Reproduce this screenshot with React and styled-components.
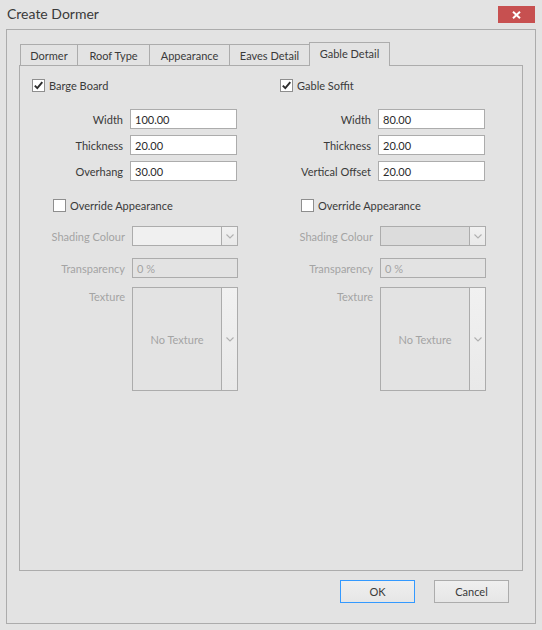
import React from 'react';
import styled, { createGlobalStyle } from 'styled-components';

const GlobalStyle = createGlobalStyle`
  html, body { margin: 0; padding: 0; background: #e3e3e3; }
  body { font-family: Lato, "Noto Sans", sans-serif; font-size: 11px; color: #3a3a3a; }
  * { box-sizing: border-box; }
`;

const Window = styled.div`
  width: 542px;
  height: 630px;
  padding: 0 6px;
  display: flex;
  flex-direction: column;
  background: #e3e3e3;
`;

const TitleBar = styled.div`
  height: 29px;
  display: flex;
  align-items: flex-start;
  justify-content: space-between;
`;

const Title = styled.div`
  font-size: 14px;
  line-height: 20px;
  color: #3a3a3a;
  padding: 4px 0 0 1px;
`;

const CloseButton = styled.div`
  width: 37px;
  height: 17px;
  margin: 6px 1px 0 0;
  background: #c75050;
  display: flex;
  align-items: center;
  justify-content: center;
`;

const Frame = styled.div`
  height: 595px;
  border: 1px solid #acacac;
  padding: 12px 12px 0 12px;
  display: flex;
  flex-direction: column;
`;

const TabStrip = styled.div`
  height: 24px;
  display: flex;
  align-items: flex-end;
  padding-left: 1px;
  margin-bottom: -1px;
  position: relative;
  z-index: 1;
`;

const Tab = styled.div`
  width: ${p => p.w}px;
  height: ${p => (p.active ? 24 : 21)}px;
  margin-left: ${p => (p.first ? 0 : -1)}px;
  margin-bottom: ${p => (p.active ? 0 : 1)}px;
  padding-bottom: ${p => (p.active ? 2 : 0)}px;
  border: 1px solid #acacac;
  border-bottom: none;
  background: #e3e3e3;
  display: flex;
  align-items: center;
  justify-content: center;
  color: #3a3a3a;
  position: relative;
  z-index: ${p => (p.active ? 2 : 1)};
`;

const Panel = styled.div`
  width: 504px;
  height: 506px;
  border: 1px solid #acacac;
  padding: 13px 0 0 12px;
  display: grid;
  grid-template-columns: 248px 248px;
  align-items: start;
`;

const Column = styled.div`
  display: flex;
  flex-direction: column;
`;

const CheckRow = styled.label`
  display: flex;
  align-items: center;
  gap: 4px;
  height: 13px;
  margin-left: ${p => p.indent || 0}px;
  margin-top: ${p => p.mt || 0}px;
  color: #3a3a3a;
`;

const Box = styled.span`
  width: 13px;
  height: 13px;
  border: 1px solid #8e8e8e;
  background: #fff;
  display: flex;
  align-items: center;
  justify-content: center;
  flex: none;
`;

const FieldGrid = styled.div`
  display: grid;
  grid-template-columns: 91px 107px;
  grid-auto-rows: 20px;
  column-gap: 7px;
  row-gap: 6px;
  margin-top: 17px;
`;

const Label = styled.span`
  text-align: right;
  align-self: ${p => (p.top ? 'start' : 'center')};
  padding-top: ${p => (p.top ? 3 : 0)}px;
  color: ${p => (p.disabled ? '#a4a4a4' : '#3a3a3a')};
  white-space: nowrap;
`;

const TextInput = styled.input`
  width: 107px;
  height: 20px;
  border: 1px solid #acacac;
  background: #fff;
  padding: 0 0 0 4px;
  margin: 0;
  font: inherit;
  color: #2a2a2a;
  outline: none;
`;

const AppRow = styled.div`
  display: grid;
  grid-template-columns: 93px 106px;
  column-gap: 7px;
  margin-top: ${p => p.mt}px;
`;

const Combo = styled.div`
  height: ${p => p.h}px;
  border: 1px solid #acacac;
  display: flex;
`;

const ComboField = styled.div`
  flex: 1;
  background: ${p => p.fill || 'transparent'};
  display: flex;
  align-items: center;
  justify-content: ${p => (p.center ? 'center' : 'flex-start')};
  padding-left: ${p => (p.center ? 0 : 4)}px;
  color: #a4a4a4;
`;

const ComboButton = styled.div`
  width: 16px;
  border-left: 1px solid #acacac;
  background: linear-gradient(#f1f1f1, #e9e9e9);
  display: flex;
  align-items: center;
  justify-content: center;
`;

const ButtonBar = styled.div`
  display: flex;
  justify-content: flex-end;
  gap: 19px;
  margin-top: 9px;
  padding-right: 14px;
`;

const Button = styled.button`
  width: 75px;
  height: 23px;
  margin: 0;
  padding: 0;
  border: 1px solid ${p => (p.focused ? '#3399ff' : '#acacac')};
  background: linear-gradient(#efefef, #e6e6e6);
  font: inherit;
  color: #3a3a3a;
`;

const Chevron = () => (
  <svg width="8" height="5" viewBox="0 0 8 5">
    <polyline points="0.5,0.5 4,4 7.5,0.5" fill="none" stroke="#b0b0b0" strokeWidth="1.1" />
  </svg>
);

const Check = () => (
  <svg width="11" height="11" viewBox="0 0 11 11">
    <path d="M1.8 5.6 L4.3 8.2 L9.3 2.2" fill="none" stroke="#2d2d2d" strokeWidth="1.9" />
  </svg>
);

const CloseX = () => (
  <svg width="9" height="8" viewBox="0 0 9 8">
    <path d="M1 0.8 L8 7.2 M8 0.8 L1 7.2" stroke="#fff" strokeWidth="2" />
  </svg>
);

const tabs = [
  { name: 'Dormer', w: 58 },
  { name: 'Roof Type', w: 73 },
  { name: 'Appearance', w: 81 },
  { name: 'Eaves Detail', w: 81 },
  { name: 'Gable Detail', w: 81, active: true },
];

const columns = [
  {
    title: 'Barge Board',
    fields: [['Width', '100.00'], ['Thickness', '20.00'], ['Overhang', '30.00']],
    comboFill: '#f0f0f0',
  },
  {
    title: 'Gable Soffit',
    fields: [['Width', '80.00'], ['Thickness', '20.00'], ['Vertical Offset', '20.00']],
    comboFill: '#dcdcdc',
  },
];

export default function App() {
  return (
    <>
      <GlobalStyle />
      <Window>
        <TitleBar>
          <Title>Create Dormer</Title>
          <CloseButton><CloseX /></CloseButton>
        </TitleBar>
        <Frame>
          <TabStrip>
            {tabs.map((t, i) => (
              <Tab key={t.name} w={t.w} first={i === 0} active={t.active}>{t.name}</Tab>
            ))}
          </TabStrip>
          <Panel>
            {columns.map(col => (
              <Column key={col.title}>
                <CheckRow>
                  <Box><Check /></Box>
                  {col.title}
                </CheckRow>
                <FieldGrid>
                  {col.fields.map(([label, value]) => (
                    <React.Fragment key={label}>
                      <Label>{label}</Label>
                      <TextInput readOnly value={value} />
                    </React.Fragment>
                  ))}
                </FieldGrid>
                <CheckRow indent={21} mt={18}>
                  <Box />
                  Override Appearance
                </CheckRow>
                <AppRow mt={14}>
                  <Label disabled>Shading Colour</Label>
                  <Combo h={20}>
                    <ComboField fill={col.comboFill} />
                    <ComboButton><Chevron /></ComboButton>
                  </Combo>
                </AppRow>
                <AppRow mt={12}>
                  <Label disabled>Transparency</Label>
                  <Combo h={20}>
                    <ComboField>0 %</ComboField>
                  </Combo>
                </AppRow>
                <AppRow mt={9}>
                  <Label disabled top>Texture</Label>
                  <Combo h={104}>
                    <ComboField center>No Texture</ComboField>
                    <ComboButton><Chevron /></ComboButton>
                  </Combo>
                </AppRow>
              </Column>
            ))}
          </Panel>
          <ButtonBar>
            <Button focused>OK</Button>
            <Button>Cancel</Button>
          </ButtonBar>
        </Frame>
      </Window>
    </>
  );
}
